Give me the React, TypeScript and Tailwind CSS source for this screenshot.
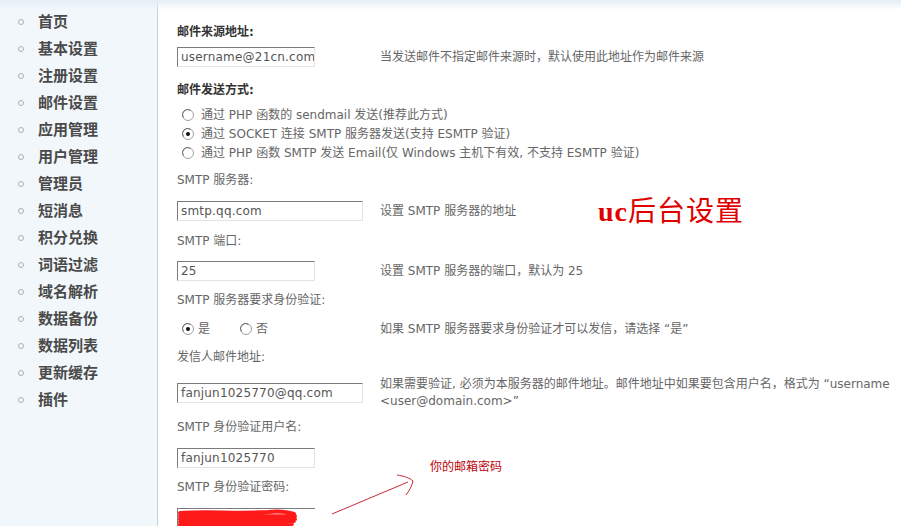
import React from "react";

const NAV = [
  "首页",
  "基本设置",
  "注册设置",
  "邮件设置",
  "应用管理",
  "用户管理",
  "管理员",
  "短消息",
  "积分兑换",
  "词语过滤",
  "域名解析",
  "数据备份",
  "数据列表",
  "更新缓存",
  "插件",
];

const FONT = { fontFamily: '"DejaVu Sans", "Noto Sans CJK SC", sans-serif' };

function Radio({ checked }: { checked?: boolean }) {
  return (
    <svg width="12" height="12" viewBox="0 0 12 12" className="shrink-0">
      <circle cx="6" cy="6" r="5.5" fill="#fff" stroke="#a0a0a0" />
      <path d="M1.5 8.5 A5 5 0 0 1 8.5 1.5" fill="none" stroke="#707070" strokeWidth="1" />
      {checked && <circle cx="6" cy="6" r="2" fill="#111" />}
    </svg>
  );
}

function Field({ value, wide }: { value: string; wide?: boolean }) {
  return (
    <div
      className={`flex h-5 items-center overflow-hidden border-t border-l border-t-[#7b7b7b] border-l-[#7b7b7b] border-r border-b border-r-[#e4e4e4] border-b-[#e4e4e4] bg-white pl-[3px] text-[12px] tracking-[0.2px] text-[#555] ${
        wide ? "w-[186px]" : "w-[138px]"
      }`}
    >
      {value}
    </div>
  );
}

function Label({ children, bold, className = "" }: { children: React.ReactNode; bold?: boolean; className?: string }) {
  return (
    <div className={`h-4 text-[12px] leading-4 ${bold ? "font-bold text-[#333]" : "text-[#666]"} ${className}`}>
      {children}
    </div>
  );
}

function Row({ children, desc, className = "" }: { children: React.ReactNode; desc?: React.ReactNode; className?: string }) {
  return (
    <div className={`grid grid-cols-[203px_1fr] items-center ${className}`}>
      <div>{children}</div>
      <div className="text-[12px] leading-[17px] text-[#666]">{desc}</div>
    </div>
  );
}

export default function App() {
  return (
    <div className="relative flex h-[526px] w-[901px] overflow-hidden bg-white" style={FONT}>
      <div className="absolute left-0 right-0 top-0 h-[10px] bg-gradient-to-b from-[#e6eff5] to-transparent" />
      <aside className="w-[158px] shrink-0 border-r border-[#c5d3de] bg-[#f2f7fb] pt-[8px]">
        <ul>
          {NAV.map((n) => (
            <li key={n} className="flex h-[27px] items-center">
              <span className="ml-[18px] h-[6px] w-[6px] rounded-full border border-[#b0b0b0]" />
              <span
                className="ml-[14px] text-[15px] font-bold text-[#4a4a4a]"
                style={{ fontFamily: '"Noto Sans CJK SC", sans-serif' }}
              >
                {n}
              </span>
            </li>
          ))}
        </ul>
      </aside>

      <main className="relative flex-1 pl-[19px] pt-[24px]">
        <Label bold>邮件来源地址:</Label>
        <Row className="mt-[7px]" desc="当发送邮件不指定邮件来源时，默认使用此地址作为邮件来源">
          <Field value="username@21cn.com" />
        </Row>

        <Label bold className="mt-[15px]">邮件发送方式:</Label>
        <div className="mt-[7px] pl-[5px] text-[12px] text-[#666]">
          <div className="flex h-[19px] items-center gap-[7px]">
            <Radio />
            <span>通过 PHP 函数的 sendmail 发送(推荐此方式)</span>
          </div>
          <div className="flex h-[19px] items-center gap-[7px]">
            <Radio checked />
            <span>通过 SOCKET 连接 SMTP 服务器发送(支持 ESMTP 验证)</span>
          </div>
          <div className="flex h-[19px] items-center gap-[7px]">
            <Radio />
            <span>通过 PHP 函数 SMTP 发送 Email(仅 Windows 主机下有效, 不支持 ESMTP 验证)</span>
          </div>
        </div>

        <Label className="mt-[10px]">SMTP 服务器:</Label>
        <Row className="mt-[13px]" desc="设置 SMTP 服务器的地址">
          <Field value="smtp.qq.com" wide />
        </Row>

        <Label className="mt-[12px]">SMTP 端口:</Label>
        <Row className="mt-[12px]" desc="设置 SMTP 服务器的端口，默认为 25">
          <Field value="25" />
        </Row>

        <Label className="mt-[11px]">SMTP 服务器要求身份验证:</Label>
        <Row
          className="mt-[12px] h-4"
          desc="如果 SMTP 服务器要求身份验证才可以发信，请选择 “是”"
        >
          <div className="flex items-center pl-[5px] text-[12px] text-[#666]">
            <Radio checked />
            <span className="ml-[4px]">是</span>
            <span className="ml-[30px]"><Radio /></span>
            <span className="ml-[4px]">否</span>
          </div>
        </Row>

        <Label className="mt-[13px]">发信人邮件地址:</Label>
        <div className="mt-[18px] grid grid-cols-[203px_1fr] items-start">
          <Field value="fanjun1025770@qq.com" wide />
          <div className="-mt-[7px] h-5 text-[12px] leading-[17px] text-[#666]">
            如果需要验证, 必须为本服务器的邮件地址。邮件地址中如果要包含用户名，格式为 “username
            <br />
            &lt;user@domain.com&gt;”
          </div>
        </div>

        <Label className="mt-[16px]">SMTP 身份验证用户名:</Label>
        <Row className="mt-[13px]">
          <Field value="fanjun1025770" />
        </Row>

        <Label className="mt-[11px]">SMTP 身份验证密码:</Label>
        <div className="relative mt-[13px] h-5 w-[138px] border-t border-l border-[#7b7b7b] bg-white">
          <svg className="absolute left-0 top-0" width="138" height="20" viewBox="0 0 138 20">
            <path
              d="M2 4 C30 2 60 5 90 3 C100 2 110 3 116 5 M2 7 C40 5 80 8 117 7 M2 10 C40 9 80 11 117 10 M2 13 C40 12 80 14 116 12 M2 16 C40 15 80 17 114 15 M3 19 C40 18 80 20 110 18"
              fill="none"
              stroke="#ff1a1a"
              strokeWidth="4"
              strokeLinecap="round"
            />
          </svg>
        </div>

        <div
          className="absolute left-[440px] top-[193px] text-[28px] font-bold leading-[32px] tracking-[1px] text-[#e00000]"
          style={{ fontFamily: '"Liberation Serif", "Noto Sans CJK SC", serif' }}
        >
          uc<span style={{ fontFamily: '"Noto Sans CJK SC", serif' }} className="font-normal">后台设置</span>
        </div>

        <div
          className="absolute left-[272px] top-[457px] text-[12px] text-[#c0000a]"
          style={{ fontFamily: '"Noto Sans CJK SC", sans-serif' }}
        >
          你的邮箱密码
        </div>

        <svg className="absolute left-[170px] top-[470px]" width="90" height="50" viewBox="0 0 90 50">
          <path d="M4 44 L80 12" fill="none" stroke="#c8283a" strokeWidth="1" />
          <path d="M69 5 C76 6 82 8 85 11 C84 16 81 21 78 25" fill="none" stroke="#c8283a" strokeWidth="1" />
        </svg>
      </main>
    </div>
  );
}
